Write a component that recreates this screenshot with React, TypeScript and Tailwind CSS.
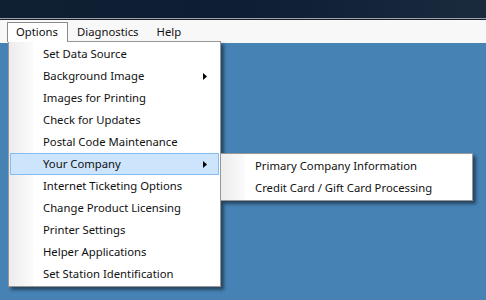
import React from "react";

type Item = { label: string; sub?: boolean; active?: boolean };

const mainItems: Item[] = [
    { label: "Set Data Source" },
    { label: "Background Image", sub: true },
    { label: "Images for Printing" },
    { label: "Check for Updates" },
    { label: "Postal Code Maintenance" },
    { label: "Your Company", sub: true, active: true },
    { label: "Internet Ticketing Options" },
    { label: "Change Product Licensing" },
    { label: "Printer Settings" },
    { label: "Helper Applications" },
    { label: "Set Station Identification" },
];

const subItems: Item[] = [
    { label: "Primary Company Information" },
    { label: "Credit Card / Gift Card Processing" },
];

// Small right-pointing triangle used for submenus
const Arrow = () => (
    <svg width="4" height="7" viewBox="0 0 4 7" className="absolute right-[11px] top-[7px]">
        <path d="M0 0 L4 3.5 L0 7 Z" fill="#000" />
    </svg>
);

const MenuItem: React.FC<{ item: Item }> = ({ item }) => (
    <div
        className={`relative h-[22px] flex items-center pl-[32px] border ${
            item.active
                ? "bg-[#cce4fc] border-[#84bdf2]"
                : "border-transparent"
        }`}
    >
        {item.label}
        {item.sub && <Arrow />}
    </div>
);

const MenuPanel: React.FC<{ items: Item[]; className: string }> = ({ items, className }) => (
    <div
        className={`absolute bg-white border border-[#979797] py-[1px] shadow-[3px_3px_3px_rgba(0,0,0,0.45)] ${className}`}
    >
        {/* Left gradient strip */}
        <div className="absolute left-0 top-0 bottom-0 w-[24px] bg-gradient-to-r from-[#ececec] to-[#fbfbfb]" />
        <div className="relative px-[1px]">
            {items.map((it) => (
                <MenuItem key={it.label} item={it} />
            ))}
        </div>
    </div>
);

export default function App() {
    return (
        <div
            className="relative w-[486px] h-[300px] overflow-hidden bg-[#4682b4] text-[11.3px] text-[#111]"
            style={{ fontFamily: "'Noto Sans', 'Open Sans', sans-serif" }}
        >
            {/* Title bar */}
            <div className="h-[18px] bg-gradient-to-r from-[#0f2032] via-[#0d1e35] to-[#1a2b3e]" />
            <div className="h-[1px] bg-[#9aa3ad]" />
            <div className="h-[1px] bg-[#1a1f26]" />

            {/* Menu bar */}
            <div className="h-[23px] bg-[#f8f8f8] flex items-start pl-[7px] pt-[2px]">
                <div className="relative z-20 h-[20px] pl-[8px] pr-[9px] border border-b-0 border-[#8a8a8a] bg-white flex items-center">
                    Options
                </div>
                <div className="h-[20px] px-[9px] flex items-center">Diagnostics</div>
                <div className="h-[20px] px-[9px] flex items-center">Help</div>
            </div>

            <MenuPanel items={mainItems} className="left-[8px] top-[41px] w-[213px] z-10" />
            <MenuPanel items={subItems} className="left-[220px] top-[153px] w-[253px] z-10" />
        </div>
    );
}
